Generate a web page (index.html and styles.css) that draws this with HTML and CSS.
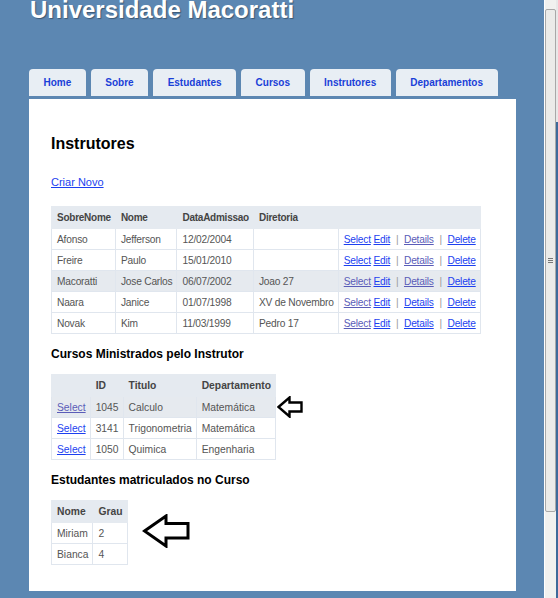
FILE: index.html
```html
<!DOCTYPE html>
<html lang="pt">
<head>
<meta charset="utf-8">
<title>Instrutores</title>
<link rel="stylesheet" href="styles.css">
</head>
<body>
<div class="window">
  <div class="page">
    <h1 class="site-title">Universidade Macoratti</h1>
    <nav class="menu">
      <a class="tab" href="#">Home</a>
      <a class="tab" href="#">Sobre</a>
      <a class="tab" href="#">Estudantes</a>
      <a class="tab" href="#">Cursos</a>
      <a class="tab" href="#">Instrutores</a>
      <a class="tab" href="#">Departamentos</a>
    </nav>
    <main class="main">
      <h2 class="page-title">Instrutores</h2>
      <p class="create"><a href="#">Criar Novo</a></p>
      <table class="grid grid-instr">
        <tr><th>SobreNome</th><th>Nome</th><th>DataAdmissao</th><th>Diretoria</th><th></th></tr>
        <tr><td>Afonso</td><td>Jefferson</td><td>12/02/2004</td><td></td>
          <td><a href="#">Select</a> <a href="#">Edit</a> <span class="sep">|</span> <a class="visited" href="#">Details</a> <span class="sep">|</span> <a href="#">Delete</a></td></tr>
        <tr><td>Freire</td><td>Paulo</td><td>15/01/2010</td><td></td>
          <td><a href="#">Select</a> <a href="#">Edit</a> <span class="sep">|</span> <a class="visited" href="#">Details</a> <span class="sep">|</span> <a href="#">Delete</a></td></tr>
        <tr class="selected"><td>Macoratti</td><td>Jose Carlos</td><td>06/07/2002</td><td>Joao 27</td>
          <td><a class="visited" href="#">Select</a> <a href="#">Edit</a> <span class="sep">|</span> <a class="visited" href="#">Details</a> <span class="sep">|</span> <a href="#">Delete</a></td></tr>
        <tr><td>Naara</td><td>Janice</td><td>01/07/1998</td><td>XV de Novembro</td>
          <td><a class="visited" href="#">Select</a> <a href="#">Edit</a> <span class="sep">|</span> <a href="#">Details</a> <span class="sep">|</span> <a href="#">Delete</a></td></tr>
        <tr><td>Novak</td><td>Kim</td><td>11/03/1999</td><td>Pedro 17</td>
          <td><a class="visited" href="#">Select</a> <a href="#">Edit</a> <span class="sep">|</span> <a href="#">Details</a> <span class="sep">|</span> <a href="#">Delete</a></td></tr>
      </table>

      <h3 class="section-title">Cursos Ministrados pelo Instrutor</h3>
      <div class="with-note">
        <table class="grid">
          <tr><th></th><th>ID</th><th>Titulo</th><th>Departamento</th></tr>
          <tr class="selected"><td><a class="visited" href="#">Select</a></td><td>1045</td><td>Calculo</td><td>Matemática</td></tr>
          <tr><td><a href="#">Select</a></td><td>3141</td><td>Trigonometria</td><td>Matemática</td></tr>
          <tr><td><a href="#">Select</a></td><td>1050</td><td>Quimica</td><td>Engenharia</td></tr>
        </table>
        <svg class="arrow arrow-small" width="26" height="22" viewBox="0 0 26 22">
          <polygon points="1.5,11 12.5,1.5 12.5,6.5 24.5,6.5 24.5,15.5 12.5,15.5 12.5,20.5" fill="#fff" stroke="#000" stroke-width="2.4" stroke-linejoin="miter"/>
        </svg>
      </div>

      <h3 class="section-title">Estudantes matriculados no Curso</h3>
      <div class="with-note">
        <table class="grid">
          <tr><th>Nome</th><th>Grau</th></tr>
          <tr><td>Miriam</td><td>2</td></tr>
          <tr><td>Bianca</td><td>4</td></tr>
        </table>
        <svg class="arrow arrow-big" width="48" height="34" viewBox="0 0 48 34">
          <polygon points="2.5,17 24,2 24,9.5 46,9.5 46,24 24,24 24,32" fill="#fff" stroke="#000" stroke-width="3" stroke-linejoin="miter"/>
        </svg>
      </div>
    </main>
  </div>
  <div class="scrollbar">
    <div class="track">
      <div class="thumb"><span class="grip"></span></div>
    </div>
    <div class="edge"></div>
  </div>
</div>
</body>
</html>
```
FILE: styles.css
```css
html, body {
  margin: 0;
  padding: 0;
}
body {
  background: #5c87b2;
  font-family: "Liberation Sans", Arial, sans-serif;
  font-size: 11px;
  color: #555;
  overflow: hidden;
}
.window {
  display: flex;
  width: 558px;
  height: 598px;
}
.page {
  width: 544px;
  padding-left: 29px;
  box-sizing: border-box;
}
.site-title {
  margin: 0 0 0 1px;
  font-size: 24px;
  line-height: 19px;
  font-weight: bold;
  color: #fff;
  text-shadow: 1px 1px 1px rgba(0, 0, 0, 0.35);
}
.menu {
  display: flex;
  gap: 5px;
  margin-top: 50px;
  height: 27px;
}
.tab {
  display: block;
  height: 27px;
  line-height: 27px;
  padding: 0 14.5px;
  background: #e8eef4;
  border-radius: 4px 4px 0 0;
  color: #1a3fd8;
  font-weight: bold;
  font-size: 10px;
  text-decoration: none;
}
.main {
  margin-top: 3px;
  width: 487px;
  height: 492px;
  box-sizing: border-box;
  padding: 35px 22px 0 22px;
  background: #fff;
}
.page-title {
  margin: 0;
  font-size: 16px;
  line-height: 20px;
  font-weight: bold;
  color: #000;
}
.create {
  margin: 22px 0 0 0;
  line-height: 13px;
}
a {
  color: #1c3ff0;
  text-decoration: underline;
}
a.visited {
  color: #5a5cb8;
}
.sep {
  color: #9a9a9a;
  margin: 0 3px;
}
.grid {
  border-collapse: collapse;
  border: 1px solid #e3e9f0;
  margin-top: 17px;
}
.grid th {
  background: #e5eaf0;
  color: #444;
  font-size: 10.3px;
  font-weight: bold;
  text-align: left;
  line-height: 13px;
  padding: 4px 4px 4px 5px;
  border: 1px solid #e5eaf0;
  white-space: nowrap;
}
.grid td {
  font-size: 10.3px;
  padding: 4px 4px 3px 5px;
  line-height: 13px;
  border: 1px solid #e0e6ee;
  white-space: nowrap;
}
.grid-instr th {
  font-size: 10px;
  letter-spacing: -0.25px;
}
.grid-instr td {
  font-size: 10.2px;
  letter-spacing: -0.2px;
}
.grid tr.selected td {
  background: #e6eaef;
}
.section-title {
  margin: 13px 0 0 0;
  font-size: 12px;
  line-height: 15px;
  font-weight: bold;
  color: #000;
}
.with-note {
  display: flex;
  align-items: flex-start;
}
.with-note .grid {
  margin-top: 12px;
}
.arrow {
  display: block;
  flex: none;
}
.arrow-small {
  margin-left: 1px;
  margin-top: 34px;
}
.arrow-big {
  margin-left: 14px;
  margin-top: 26px;
}
.scrollbar {
  width: 14px;
  display: flex;
}
.track {
  width: 12px;
  border-left: 1px solid #ffffff;
  background: #f1f1ef;
  padding-top: 9px;
  box-sizing: border-box;
}
.thumb {
  height: 501px;
  border: 1px solid #a8a8a8;
  border-radius: 2px;
  background: #ebebe9;
  display: flex;
  align-items: center;
  justify-content: center;
}
.grip {
  display: block;
  width: 5px;
  height: 6px;
  background: repeating-linear-gradient(#777 0 1px, transparent 1px 2px);
}
.edge {
  width: 2px;
  background: linear-gradient(#e8e8e8 0 122px, #3e6a9a 122px);
}
```
